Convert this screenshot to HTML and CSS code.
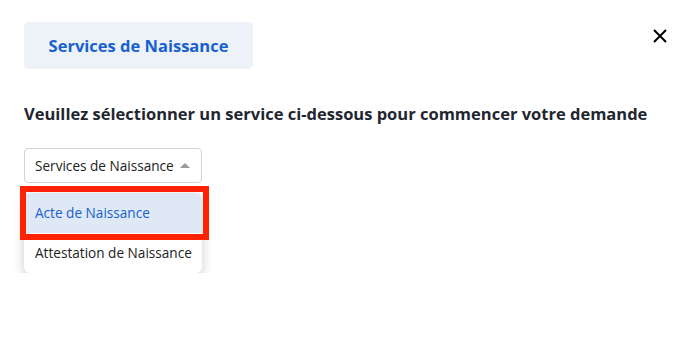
FILE: index.html
```html
<!DOCTYPE html>
<html>
  <head>
    <title>Services de Naissance</title>
    <link rel="stylesheet" href="styles.css">
  </head>
  <body>
    <div class="modal">
      <div class="modal-head">
        <button class="tab">Services de Naissance</button>
        <button class="close" aria-label="Fermer">
          <svg width="14" height="14" viewBox="0 0 14 14">
            <path d="M1 1 L13 13 M13 1 L1 13" stroke="#000" stroke-width="2" fill="none" />
          </svg>
        </button>
      </div>

      <h2 class="prompt">Veuillez sélectionner un service ci-dessous pour commencer votre demande</h2>

      <div class="picker">
        <div class="select">
          <span>Services de Naissance</span>
          <span class="caret"></span>
        </div>
        <ul class="options">
          <li class="active">Acte de Naissance</li>
          <li>Attestation de Naissance</li>
        </ul>
        <div class="highlight"></div>
      </div>
    </div>
  </body>
</html>
```

FILE: styles.css
```css
body {
  margin: 0;
  background: #fff;
  font-family: "Open Sans", "Noto Sans", sans-serif;
  color: #222;
}
.modal {
  padding: 22px 17px 0 24px;
}
.modal-head {
  display: flex;
  justify-content: space-between;
  align-items: flex-start;
}
.tab {
  width: 229px;
  height: 47px;
  border: none;
  border-radius: 5px;
  background: #edf2f9;
  color: #1860cf;
  font-family: inherit;
  font-size: 16.5px;
  font-weight: 700;
  padding: 0;
}
.close {
  border: none;
  background: none;
  padding: 0;
  margin-top: 7px;
  width: 14px;
  height: 14px;
}
.prompt {
  margin: 34px 0 0;
  font-size: 16.5px;
  font-weight: 700;
  color: #1f2630;
  line-height: 22px;
}
.picker {
  position: relative;
  width: 178px;
  margin-top: 23px;
}
.select {
  display: flex;
  align-items: center;
  justify-content: space-between;
  height: 33px;
  padding: 0 11px 0 10px;
  border: 1px solid #cfd3d8;
  border-radius: 4px;
  font-size: 13.6px;
  color: #222;
}
.caret {
  width: 0;
  height: 0;
  border-left: 5px solid transparent;
  border-right: 5px solid transparent;
  border-bottom: 5px solid #9a9a9a;
}
.options {
  list-style: none;
  margin: 10px 0 0;
  padding: 0;
  border-radius: 6px;
  box-shadow: 0 4px 12px rgba(0, 0, 0, 0.2);
  overflow: hidden;
  font-size: 13.6px;
}
.options li {
  height: 40px;
  line-height: 40px;
  padding-left: 11px;
  color: #222;
}
.options li.active {
  background: #dfe9f6;
  color: #1860cf;
}
.highlight {
  position: absolute;
  left: -4px;
  top: 38px;
  width: 177px;
  height: 42px;
  border: 6px solid #ff2200;
}
```
